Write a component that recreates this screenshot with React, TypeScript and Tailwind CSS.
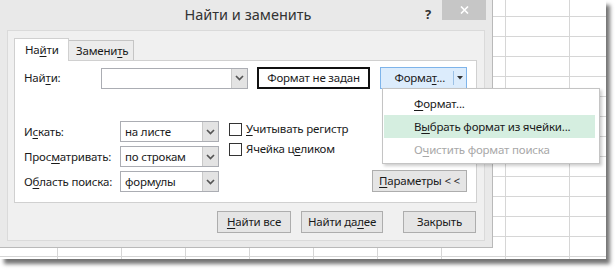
import React from "react";

const F = { fontFamily: '"Noto Sans", "Liberation Sans", sans-serif' };

function U({ children }: { children: React.ReactNode }) {
  return <span className="underline underline-offset-2 decoration-1">{children}</span>;
}

function Chevron() {
  return (
    <svg width="9" height="6" viewBox="0 0 9 6">
      <polyline points="1,1 4.5,4.5 8,1" fill="none" stroke="#555" strokeWidth="1.7" />
    </svg>
  );
}

function Select({ value, w }: { value: string; w: string }) {
  return (
    <div className={`flex h-[21px] ${w} border border-[#abadb3] bg-white`}>
      <div className="flex-1 pl-[4px] flex items-center text-[11.5px] text-[#1a1a1a]">{value}</div>
      <div className="w-[16px] flex items-center justify-center bg-[#e3e3e3] border-l border-[#c9c9c9]">
        <Chevron />
      </div>
    </div>
  );
}

function Btn({ children, w }: { children: React.ReactNode; w: string }) {
  return (
    <div
      className={`${w} h-[22px] flex items-center justify-center border border-[#adadad] bg-[#e5e5e5] text-[11.5px] text-[#1a1a1a]`}
    >
      {children}
    </div>
  );
}

function Check({ children }: { children: React.ReactNode }) {
  return (
    <div className="flex items-center h-[20px] gap-[4px]">
      <div className="w-[13px] h-[13px] border border-[#333] bg-white" />
      <span className="text-[11.5px] text-[#1a1a1a]">{children}</span>
    </div>
  );
}

export default function App() {
  return (
    <div className="w-[615px] h-[271px] bg-white tracking-[-0.2px]" style={F}>
      <div className="relative w-[606px] h-[259px] overflow-hidden bg-white shadow-[4px_5px_4px_rgba(0,0,0,0.55)] bg-[linear-gradient(to_right,#d6d6d6_1px,transparent_1px),linear-gradient(to_bottom,#d6d6d6_1px,transparent_1px)] [background-size:64px_20px] [background-position:57px_16px]">
        {/* Dialog window */}
        <div className="absolute left-0 top-0 w-[493px] h-[248px] bg-[#e9e9e9] border-r border-b border-[#b9b9b9] flex flex-col">
          {/* Title bar */}
          <div className="h-[30px] relative flex items-center justify-center">
            <span className="text-[14.5px] text-[#333] mt-[-1px] ml-[4px] tracking-normal">Найти и заменить</span>
            <span className="absolute left-[425px] top-[5px] text-[13px] font-bold text-[#333]">?</span>
            <div className="absolute left-[442px] top-0 w-[44px] h-[20px] bg-[#c6c6c6] flex items-center justify-center">
              <svg width="9" height="8" viewBox="0 0 9 8">
                <path d="M1 0.5 L8 7.5 M8 0.5 L1 7.5" stroke="#fff" strokeWidth="1.6" />
              </svg>
            </div>
          </div>
          {/* Client area */}
          <div className="flex-1 mx-[7px] mb-[6px] bg-[#f0f0f0] border border-[#dadada] flex flex-col pl-[6px] pr-[7px] pt-[7px]">
            {/* Tabs */}
            <div className="flex items-end h-[23px] relative z-10">
              <div className="h-[23px] w-[55px] bg-white border border-[#d0d0d0] border-b-0 flex items-center pl-[10px] text-[11.5px] text-[#1a1a1a]">
                На<U>й</U>ти
              </div>
              <div className="h-[20px] w-[65px] bg-[#ececec] border border-[#c5c5c5] border-l-0 border-b-0 flex items-center pl-[7px] text-[11.5px] text-[#1a1a1a] mb-[1px]">
                Замени<U>т</U>ь
              </div>
            </div>
            {/* Panel */}
            <div className="mt-[-1px] h-[143px] bg-white border border-[#d0d0d0] flex flex-col pl-[9px] pr-[9px] pt-[6px]">
              <div className="flex items-center h-[22px]">
                <span className="w-[78px] text-[11.5px] text-[#1a1a1a]">
                  Най<U>т</U>и:
                </span>
                <Select value="" w="w-[148px]" />
                <div className="ml-[9px] w-[113px] h-[22px] border-2 border-[#111] flex items-center justify-center text-[11.5px] text-[#1a1a1a]">
                  Формат не задан
                </div>
                <div className="ml-[10px] w-[88px] h-[22px] border border-[#7eb4ea] bg-[#dcecfc] flex items-center text-[11.5px] text-[#1a1a1a]">
                  <div className="flex-1 text-center pl-[6px]">
                    Форма<U>т</U>...
                  </div>
                  <div className="h-[14px] border-l border-[#9cc1e6]" />
                  <div className="w-[12px] flex items-center justify-center">
                    <svg width="6" height="4" viewBox="0 0 6 4">
                      <path d="M0 0 L6 0 L3 3.5 Z" fill="#333" />
                    </svg>
                  </div>
                </div>
              </div>
              <div className="flex mt-[32px]">
                <div className="flex flex-col gap-[4px]">
                  {[
                    [<>И<U>с</U>кать:</>, "на листе"],
                    [<>Прос<U>м</U>атривать:</>, "по строкам"],
                    [<>О<U>б</U>ласть поиска:</>, "формулы"],
                  ].map(([l, v], i) => (
                    <div key={i} className="flex items-center h-[21px]">
                      <span className="w-[96px] text-[11.5px] text-[#1a1a1a] whitespace-nowrap">{l}</span>
                      <Select value={v as string} w="w-[99px]" />
                    </div>
                  ))}
                </div>
                <div className="flex flex-col ml-[10px] mt-[-2px]">
                  <Check>
                    <U>У</U>читывать регистр
                  </Check>
                  <Check>
                    Ячейка ц<U>е</U>ликом
                  </Check>
                </div>
                <div className="flex-1 flex items-end justify-end">
                  <Btn w="w-[95px]">
                    <U>П</U>араметры &lt; &lt;
                  </Btn>
                </div>
              </div>
            </div>
            {/* Bottom buttons */}
            <div className="flex justify-end mt-[8px] pr-[1px]">
              <Btn w="w-[74px]">
                <U>Н</U>айти все
              </Btn>
              <div className="w-[10px]" />
              <Btn w="w-[82px]">
                Найти да<U>л</U>ее
              </Btn>
              <div className="w-[20px]" />
              <Btn w="w-[73px]">Закрыть</Btn>
            </div>
          </div>
        </div>
        {/* Dropdown menu */}
        <div className="absolute left-[382px] top-[88px] w-[218px] bg-white border border-[#c4c4c4] shadow-[2px_2px_3px_rgba(0,0,0,0.2)] pt-[3px] pb-[2px] px-[1px] text-[11.5px]">
          <div className="h-[23px] flex items-center pl-[30px] text-[#1a1a1a]">
            <U>Ф</U>ормат...
          </div>
          <div className="h-[23px] flex items-center pl-[30px] mr-[3px] bg-[#d5eee0] text-[#1a1a1a]">
            В<U>ы</U>брать формат из ячейки...
          </div>
          <div className="h-[23px] flex items-center pl-[30px] text-[#a8a8a8]">
            О<U>ч</U>истить формат поиска
          </div>
        </div>
      </div>
    </div>
  );
}
